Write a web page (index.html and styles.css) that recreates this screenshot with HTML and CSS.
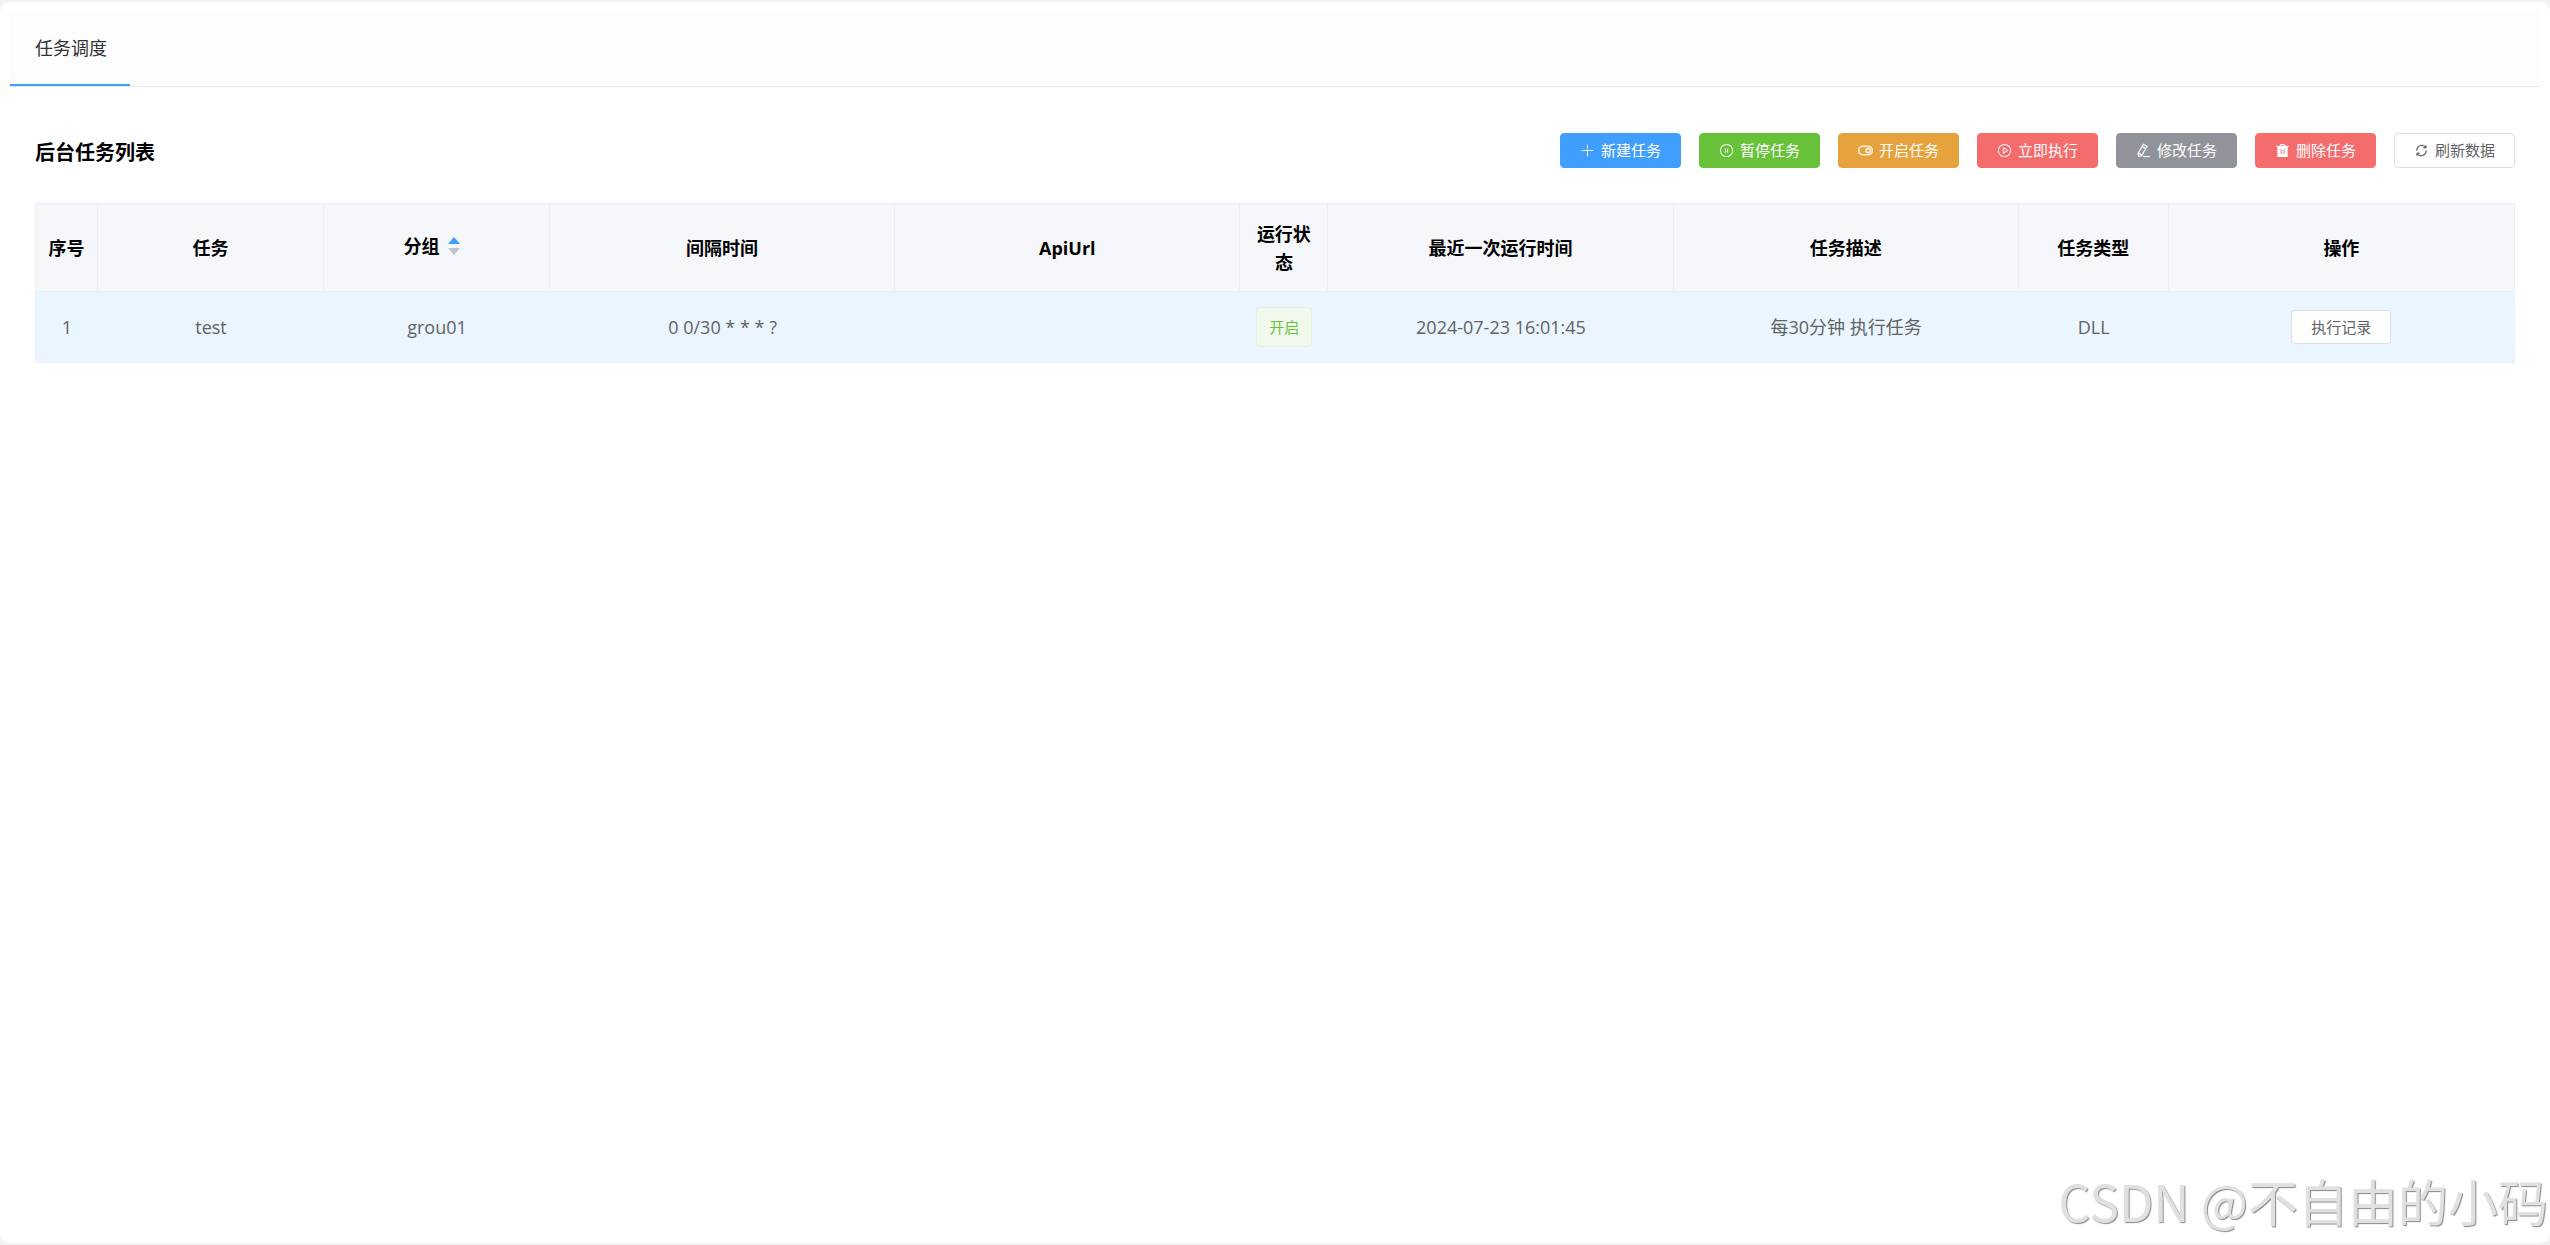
FILE: index.html
```html
<!DOCTYPE html>
<html lang="zh-CN">
<head>
<meta charset="utf-8">
<title>任务调度</title>
<link rel="stylesheet" href="styles.css">
</head>
<body>
<div class="panel">
  <nav class="tabs"><a class="tab active" href="#jobs">任务调度</a></nav>
  <main class="content" id="jobs">
    <header class="toolbar">
      <h1>后台任务列表</h1>
      <div class="actions">
        <button class="btn primary" type="button"><svg class="icon" viewBox="0 0 1024 1024"><path d="M480 480V128a32 32 0 0 1 64 0v352h352a32 32 0 1 1 0 64H544v352a32 32 0 1 1-64 0V544H128a32 32 0 0 1 0-64h352z"/></svg>新建任务</button>
        <button class="btn success" type="button"><svg class="icon" viewBox="0 0 1024 1024"><path d="M512 64a448 448 0 1 1 0 896 448 448 0 0 1 0-896zm0 832a384 384 0 0 0 0-768 384 384 0 0 0 0 768zm-80-544q32 0 32 32v256q0 32-32 32t-32-32V384q0-32 32-32zm160 0q32 0 32 32v256q0 32-32 32t-32-32V384q0-32 32-32z"/></svg>暂停任务</button>
        <button class="btn warning" type="button"><svg class="icon bold" viewBox="0 0 1024 1024"><path d="M329.956 257.138a254.862 254.862 0 0 0 0 509.724h364.088a254.862 254.862 0 0 0 0-509.724H329.956zm0-72.818h364.088a327.68 327.68 0 1 1 0 655.36H329.956a327.68 327.68 0 1 1 0-655.36z"/><path d="M694.044 621.227a109.227 109.227 0 1 0 0-218.454 109.227 109.227 0 0 0 0 218.454zm0 72.817a182.044 182.044 0 1 1 0-364.088 182.044 182.044 0 0 1 0 364.088z"/></svg>开启任务</button>
        <button class="btn danger" type="button"><svg class="icon" viewBox="0 0 1024 1024"><path d="M512 64a448 448 0 1 1 0 896 448 448 0 0 1 0-896zm0 832a384 384 0 0 0 0-768 384 384 0 0 0 0 768zm-48-247.616L668.608 512 464 375.616v272.768zm10.624-342.656 249.472 166.336a48 48 0 0 1 0 79.872L474.624 718.272A48 48 0 0 1 400 678.336V345.6a48 48 0 0 1 74.624-39.936z"/></svg>立即执行</button>
        <button class="btn info" type="button"><svg class="icon bold" viewBox="0 0 1024 1024"><path d="m199.04 672.64 193.984 112 224-387.968-193.92-112-224 388.032zm-23.872 60.16 32.896 148.288 144.896-45.696L175.168 732.8zM455.04 229.248l193.92 112 56.704-98.112-193.984-112-56.64 98.112zM104.32 708.8l384-665.024 304.768 175.936L409.152 884.8h.064l-248.448 78.336L104.32 708.8zm384 254.272v-64h448v64h-448z"/></svg>修改任务</button>
        <button class="btn danger" type="button"><svg class="icon" viewBox="0 0 1024 1024"><path fill-rule="evenodd" d="M352 192V95.936a32 32 0 0 1 32-32h256a32 32 0 0 1 32 32V192h256a32 32 0 1 1 0 64H96a32 32 0 0 1 0-64h256zm64 0h192v-64H416v64zM192 960a32 32 0 0 1-32-32V256h704v672a32 32 0 0 1-32 32H192zm224-192a32 32 0 0 0 32-32V416a32 32 0 0 0-64 0v320a32 32 0 0 0 32 32zm192 0a32 32 0 0 0 32-32V416a32 32 0 0 0-64 0v320a32 32 0 0 0 32 32z"/></svg>删除任务</button>
        <button class="btn" type="button"><svg class="icon bold" viewBox="0 0 1024 1024"><path d="M784.512 230.272v-50.56a32 32 0 1 1 64 0v149.056a32 32 0 0 1-32 32H667.52a32 32 0 1 1 0-64h92.992A320 320 0 0 0 524.8 192C358.72 192 224 326.72 224 492.8a32 32 0 1 1-64 0C160 291.392 323.392 128 524.8 128c101.056 0 193.344 42.048 259.712 102.272zM239.488 793.728v50.56a32 32 0 1 1-64 0V695.232a32 32 0 0 1 32-32H356.48a32 32 0 1 1 0 64h-92.992A320 320 0 0 0 499.2 832C665.28 832 800 697.28 800 531.2a32 32 0 1 1 64 0C864 732.608 700.608 896 499.2 896c-101.056 0-193.344-42.048-259.712-102.272z"/></svg>刷新数据</button>
      </div>
    </header>
    <table class="jobs">
      <colgroup>
        <col class="c-index"><col class="c-name"><col class="c-name"><col><col><col class="c-state"><col><col><col class="c-type"><col>
      </colgroup>
      <thead>
        <tr>
          <th>序号</th><th>任务</th>
          <th><span class="sortable">分组<svg class="caret" viewBox="0 0 12 18"><path class="up" d="M6 0l6 7H0z"/><path class="down" d="M6 18l6-7H0z"/></svg></span></th>
          <th>间隔时间</th><th>ApiUrl</th><th>运行状态</th><th>最近一次运行时间</th><th>任务描述</th><th>任务类型</th><th>操作</th>
        </tr>
      </thead>
      <tbody>
        <tr>
          <td>1</td><td>test</td><td>grou01</td><td>0 0/30 * * * ?</td><td></td>
          <td><span class="tag">开启</span></td>
          <td>2024-07-23 16:01:45</td><td>每30分钟 执行任务</td><td>DLL</td>
          <td><button class="btn small" type="button">执行记录</button></td>
        </tr>
      </tbody>
    </table>
  </main>
</div>
<div class="watermark">CSDN @不自由的小码</div>
</body>
</html>
```
FILE: styles.css
```css
* { box-sizing: border-box; }

body {
  margin: 0;
  min-height: 100vh;
  padding: 2px 0;
  display: flex;
  background: #f2f2f2;
  color: #606266;
  font: 18px/20px "Open Sans", "Noto Sans CJK SC", sans-serif;
}

.panel {
  flex: 1;
  padding: 10px;
  border-radius: 10px;
  background: #fff;
}

.tabs {
  display: flex;
  height: 75px;
  background: #fdfdfd;
  border-bottom: 1px solid #e4e7ed;
}

.tab {
  padding: 26px 23px 0 25px;
  color: #303133;
  text-decoration: none;
}

.tab.active { border-bottom: 2px solid #409eff; }

.content { padding: 46px 25px; }

.toolbar {
  display: flex;
  justify-content: space-between;
  align-items: flex-end;
  margin-bottom: 35px;
}

h1 {
  margin: 0;
  color: #000;
  font-size: 20px;
  line-height: 30px;
}

.actions { display: flex; gap: 18px; }

.btn {
  display: inline-flex;
  align-items: center;
  justify-content: center;
  gap: 6px;
  height: 35px;
  padding: 0 19px;
  border: 1px solid #dcdfe6;
  border-radius: 4px;
  background: #fff;
  color: #606266;
  font: inherit;
  font-size: 15px;
  line-height: 15px;
  white-space: nowrap;
}

.icon { width: 15px; height: 15px; fill: currentColor; }
.bold { stroke: currentColor; stroke-width: 20px; }

.primary { background: #409eff; border-color: #409eff; color: #fff; }
.success { background: #67c23a; border-color: #67c23a; color: #fff; }
.warning { background: #e6a23c; border-color: #e6a23c; color: #fff; }
.danger { background: #f56c6c; border-color: #f56c6c; color: #fff; }
.info { background: #909399; border-color: #909399; color: #fff; }

.small { height: 34px; vertical-align: middle; }

.jobs {
  width: 100%;
  table-layout: fixed;
  border-collapse: separate;
  border-spacing: 0;
  border: 1px solid #ebeef5;
}

.c-index { width: 62px; }
.c-name { width: 226px; }
.c-state { width: 88px; }
.c-type { width: 150px; }

th, td {
  padding: 0 9px;
  border-bottom: 1px solid #ebeef5;
  text-align: center;
}

th {
  height: 88px;
  border-right: 1px solid #ebeef5;
  background: #f5f7fa;
  color: #000;
  font-weight: 700;
  line-height: 28px;
}

td {
  height: 70px;
  background: #ebf5ff;
}

th:last-child { border-right: 0; }
tbody tr:last-child td { border-bottom: 0; }

.sortable {
  display: inline-flex;
  align-items: center;
  gap: 8px;
  padding: 0 10px 4px 0;
  vertical-align: middle;
}

.caret { width: 12px; height: 18px; }
.up { fill: #409eff; }
.down { fill: #c0c4cc; }

.tag {
  display: inline-block;
  height: 40px;
  padding: 0 12px;
  border: 1px solid #e1f3d8;
  border-radius: 4px;
  background: #f0f9eb;
  color: #67c23a;
  font-size: 15px;
  line-height: 38px;
  vertical-align: middle;
}

.watermark {
  position: fixed;
  right: 2px;
  bottom: 10px;
  color: #e0e0e0;
  font: 400 50px/70px "Noto Sans CJK SC", sans-serif;
  text-shadow: 1px 1px 1px #888;
  pointer-events: none;
}
```
